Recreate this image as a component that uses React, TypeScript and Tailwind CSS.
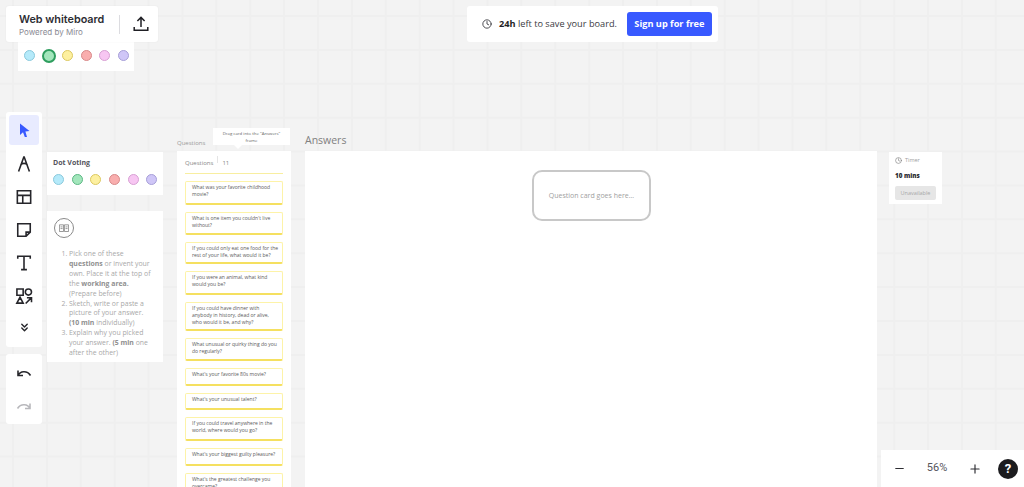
import { ChevronsDown, Clock, Minus, Plus } from 'lucide-react';

const colors = [
  { fill: 'bg-[#b5eafa]', ring: 'border-[#8ac9dc]' },
  { fill: 'bg-[#a3e6bc]', ring: 'border-[#5cb884]' },
  { fill: 'bg-[#fdf0a0]', ring: 'border-[#dcc860]' },
  { fill: 'bg-[#f9aeae]', ring: 'border-[#d88a8a]' },
  { fill: 'bg-[#f7c6f2]', ring: 'border-[#d8a0d4]' },
  { fill: 'bg-[#cfc6f7]', ring: 'border-[#a79fd8]' },
];

const questions = [
  { text: 'What was your favorite childhood movie?', h: 'h-[24px]' },
  { text: "What is one item you couldn't live without?", h: 'h-[23px]' },
  { text: 'If you could only eat one food for the rest of your life, what would it be?', h: 'h-[22px]' },
  { text: 'If you were an animal, what kind would you be?', h: 'h-[24px]' },
  { text: 'If you could have dinner with anybody in history, dead or alive, who would it be, and why?', h: 'h-[29px]' },
  { text: 'What unusual or quirky thing do you do regularly?', h: 'h-[23px]' },
  { text: "What's your favorite 80s movie?", h: 'h-[18px]' },
  { text: "What's your unusual talent?", h: 'h-[17px]' },
  { text: 'If you could travel anywhere in the world, where would you go?', h: 'h-[24px]' },
  { text: "What's your biggest guilty pleasure?", h: 'h-[18px]' },
  { text: "What's the greatest challenge you overcame?", h: 'h-[24px]' },
];

function Dots({ selected }: { selected?: number }) {
  return (
    <div className="flex items-center">
      {colors.map((c, i) => (
        <div key={i} className="flex w-[18.7px] justify-center">
          <span
            className={`block rounded-full ${c.fill} ${
              i === selected ? 'size-[14px] border-2 border-[#2f9e5f]' : `size-[11px] border ${c.ring}`
            }`}
          />
        </div>
      ))}
    </div>
  );
}

function ToolIcon({ children }: { children: React.ReactNode }) {
  return (
    <svg
      viewBox="0 0 24 24"
      className="size-[20px] text-[#26262b]"
      fill="none"
      stroke="currentColor"
      strokeWidth="1.9"
    >
      {children}
    </svg>
  );
}

export default function App() {
  return (
    <div className="relative h-[487px] w-[1024px] overflow-hidden bg-[#f3f3f3] bg-[linear-gradient(#efefef_2px,transparent_2px),linear-gradient(90deg,#efefef_2px,transparent_2px)] bg-[size:33.9px_33.9px] bg-[position:12px_15px] font-['Open_Sans',sans-serif]">
      {/* colour picker under the header */}
      <div className="absolute left-[18px] top-[42px] flex h-[29px] w-[116px] items-center bg-white pb-[2px] pl-[2.6px]">
        <Dots selected={1} />
      </div>

      {/* header */}
      <div className="absolute left-[6px] top-[6px] flex h-[36px] w-[152px] items-center rounded-[3px] bg-white shadow-[0_0_2px_rgba(0,0,0,0.06)]">
        <div className="w-[113px] pl-[13px] pt-[1px] font-['Inter',sans-serif]">
          <div className="text-[10.8px] font-semibold leading-[15px] text-[#2d2d33]">Web whiteboard</div>
          <div className="text-[8px] leading-[11px] text-[#8a8a94]">Powered by Miro</div>
        </div>
        <div className="h-[19px] w-px bg-[#dcdce0]" />
        <svg viewBox="0 0 16 16" className="ml-[13px] size-[16px] text-[#1f1f24]" fill="none" stroke="currentColor" strokeWidth="1.5">
          <path d="M8 11V1.6M4.4 5 8 1.4 11.6 5M1.2 11v3.2h13.6V11" />
        </svg>
      </div>

      {/* save banner */}
      <div className="absolute left-[467px] top-[6px] flex h-[36px] w-[251px] items-center rounded-[3px] bg-white pl-[15px]">
        <Clock className="size-[10px] text-[#2d2d33]" strokeWidth={2} />
        <span className="ml-[7px] text-[9.2px] text-[#3a3a42]">
          <b className="font-bold text-[#1f1f24]">24h</b> left to save your board.
        </span>
        <button className="ml-[10px] h-[24px] w-[85px] rounded-[3px] bg-[#3859ff] text-[9.2px] font-bold text-white">
          Sign up for free
        </button>
      </div>

      {/* tools */}
      <div className="absolute left-[6px] top-[112px] flex h-[235px] w-[36px] flex-col items-center rounded-[3px] bg-white pt-[3px]">
        <div className="flex size-[30px] items-center justify-center rounded-[3px] bg-[#e8ebff]">
          <svg viewBox="0 0 16 16" className="size-[16px] text-[#3859ff]" fill="currentColor">
            <path d="M4 1.5 13.5 9 9.4 9.6 11 15 8.8 15 7 10.3 4 13Z" />
          </svg>
        </div>
        <div className="mt-[9px] flex flex-col items-center gap-[13px]">
          <ToolIcon>
            <path d="M12 3 5.5 21M12 3l6.5 18M8 13c2-2.4 6-2.4 8 0" />
          </ToolIcon>
          <ToolIcon>
            <path d="M4 4.5h16v15H4zM4 10h16M10.5 10v9.5" />
          </ToolIcon>
          <ToolIcon>
            <path d="M4.5 4.5h15v10l-5 5h-10zM19.5 14.5h-5v5" />
          </ToolIcon>
          <ToolIcon>
            <path d="M4.5 7V4h15v3M12 4v16M8.5 20h7" />
          </ToolIcon>
          <ToolIcon>
            <path d="M3.5 3.5h7.5V11H3.5zM21 7.2a3.7 3.7 0 1 1-7.4 0 3.7 3.7 0 0 1 7.4 0ZM7.2 13.5 11 20.5H3.4ZM14 21l7-7M15.5 14H21v5.5" />
          </ToolIcon>
        </div>
        <ChevronsDown className="mt-[15px] size-[13px] text-[#26262b]" strokeWidth={2.6} />
      </div>

      {/* undo redo */}
      <div className="absolute left-[6px] top-[354px] flex h-[70px] w-[36px] flex-col items-center gap-[17px] rounded-[3px] bg-white pt-[10px]">
        <svg viewBox="0 0 16 16" className="size-[16px] text-[#26262b]" fill="none" stroke="currentColor" strokeWidth="1.6">
          <path d="M2 11.5C4 7 11 6 14.5 11.5M2 6.5v5h5" />
        </svg>
        <svg viewBox="0 0 16 16" className="size-[16px] text-[#b8b8bc]" fill="none" stroke="currentColor" strokeWidth="1.6">
          <path d="M14 11.5C12 7 5 6 1.5 11.5M14 6.5v5H9" />
        </svg>
      </div>

      {/* dot voting */}
      <div className="absolute left-[47px] top-[152px] h-[43px] w-[116px] bg-white pl-[6px] pt-[6px]">
        <div className="mb-[6px] text-[7px] font-bold leading-[10px] text-[#55555c]">Dot Voting</div>
        <div className="-ml-[3.8px]">
          <Dots />
        </div>
      </div>

      {/* instructions */}
      <div className="absolute left-[47px] top-[211px] h-[151px] w-[116px] bg-white pl-[7px] pt-[7px]">
        <div className="flex size-[20px] items-center justify-center rounded-full border border-[#8a8a8a]">
          <svg viewBox="0 0 12 10" className="w-[10px] text-[#777]" fill="none" stroke="currentColor" strokeWidth="0.9">
            <path d="M.5 1h5v8h-5zM6.5 1h5v8h-5zM1.8 3.5h2.5M1.8 5.5h2.5M7.8 3.5h2.5M7.8 5.5h2.5" />
          </svg>
        </div>
        <ol className="mt-[11px] list-decimal pl-[15px] pr-[4px] text-[6.9px] leading-[9.9px] text-[#a8a8a8]">
          <li>
            Pick one of these <b className="text-[#8f8f8f]">questions</b> or invent your own. Place it at the top of the{' '}
            <b className="text-[#8f8f8f]">working area.</b>
            <br />
            (Prepare before)
          </li>
          <li>
            Sketch, write or paste a picture of your answer.
            <br />
            <b className="text-[#8f8f8f]">(10 min</b> individually)
          </li>
          <li>
            Explain why you picked your answer. <b className="text-[#8f8f8f]">(5 min</b> one after the other)
          </li>
        </ol>
      </div>

      {/* questions frame */}
      <div className="absolute left-[177px] top-[139px] text-[6px] leading-[8px] text-[#9a9a9a]">Questions</div>
      <div className="absolute left-[213px] top-[128px] h-[17px] w-[77px] bg-white pt-[2px] text-center text-[4.3px] leading-[6.5px] text-[#666]">
        Drag card into the "Answers"
        <br />
        frame
        <div className="absolute left-[21px] top-[17px] size-0 border-x-[4px] border-t-[4px] border-x-transparent border-t-white" />
      </div>
      <div className="absolute left-[177px] top-[151px] h-[336px] w-[114px] overflow-hidden bg-white px-[8px]">
        <div className="flex h-[23px] items-end gap-[4px] border-b border-[#f8eea0] pb-[5px] text-[6px] leading-[9px] text-[#888]">
          <span>Questions</span>
          <span className="h-[7px] w-px self-center bg-[#e4e4e4]" />
          <span>11</span>
        </div>
        <div className="mt-[7px] flex flex-col gap-[7px]">
          {questions.map((q) => (
            <div
              key={q.text}
              className={`${q.h} shrink-0 rounded-[2px] border border-b-2 border-[#fdf3a8] border-b-[#f5e060] bg-white pl-[6px] pr-[2px] pt-[2px] text-[5px] leading-[7px] text-[#5a5a5a]`}
            >
              {q.text}
            </div>
          ))}
        </div>
      </div>

      {/* answers frame */}
      <div className="absolute left-[305px] top-[133px] text-[10.5px] leading-[15px] text-[#808080]">Answers</div>
      <div className="absolute left-[305px] top-[151px] flex h-[336px] w-[572px] justify-center bg-white pl-[1px] pt-[19px]">
        <div className="flex h-[51px] w-[119px] items-center justify-center rounded-[10px] border-2 border-[#c8c8c8] pt-[1px] text-[7px] text-[#a0a0a0]">
          Question card goes here...
        </div>
      </div>

      {/* timer */}
      <div className="absolute left-[889px] top-[152px] h-[52px] w-[53px] bg-white pl-[6px] pt-[4px]">
        <div className="flex items-center gap-[3px] text-[5.5px] leading-[8px] text-[#a0a0a0]">
          <Clock className="size-[7px] text-[#777]" />
          Timer
        </div>
        <div className="mt-[7px] text-[6.3px] font-extrabold leading-[9px] text-[#2d2d33]">10 mins</div>
        <div className="mt-[6px] flex h-[14px] w-[41px] items-center justify-center rounded-[2px] bg-[#e6e6e6] text-[5.5px] text-[#a8a8a8]">
          Unavailable
        </div>
      </div>

      {/* zoom controls */}
      <div className="absolute left-[881px] top-[450px] flex h-[37px] w-[143px] items-center bg-white pl-[12px] font-['Roboto',sans-serif]">
        <Minus className="size-[13px] text-[#2d2d33]" strokeWidth={2} />
        <span className="ml-[16px] w-[30px] text-center text-[11px] text-[#55555c]">56%</span>
        <Plus className="ml-[16px] size-[14px] text-[#2d2d33]" strokeWidth={2} />
        <div className="ml-[16px] flex size-[20px] items-center justify-center rounded-full bg-[#1c1c1f] text-[13px] font-bold text-white">
          ?
        </div>
      </div>
    </div>
  );
}
